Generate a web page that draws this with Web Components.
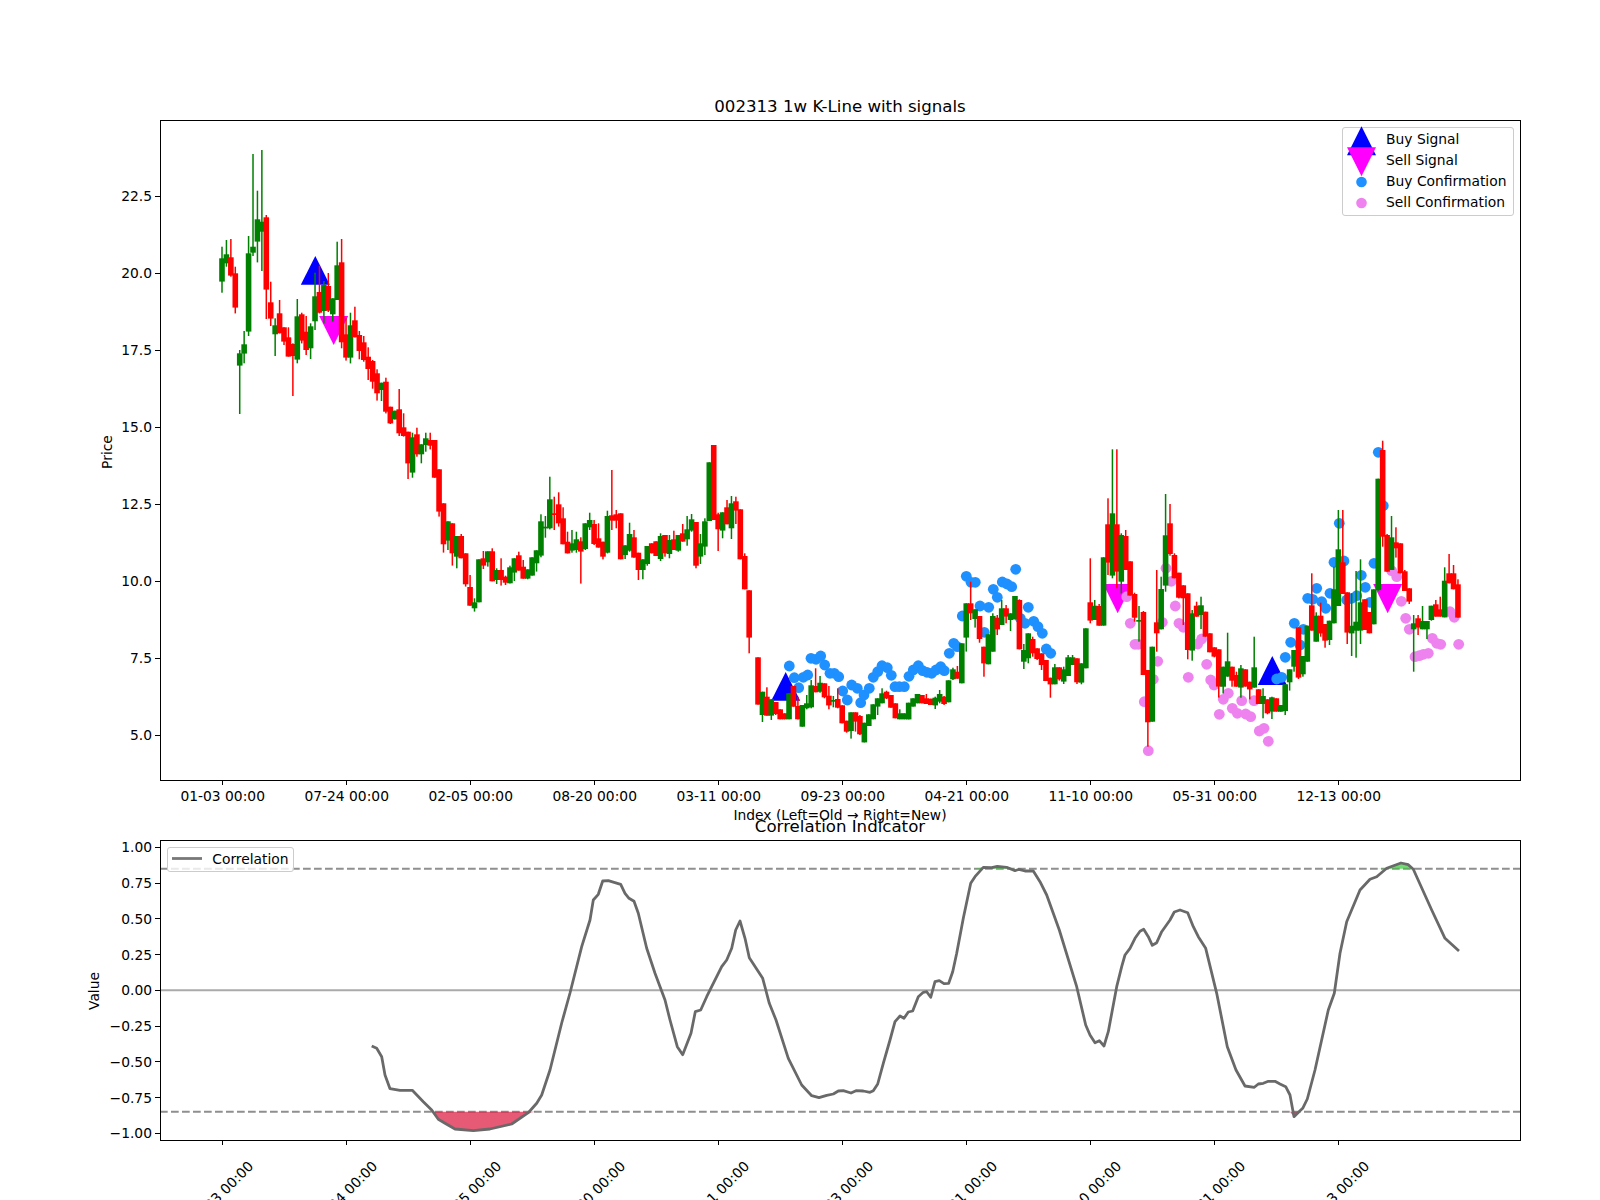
<!DOCTYPE html>
<html lang="en">
<head>
<meta charset="utf-8">
<title>002313 1w K-Line with signals</title>
<style>
html,body{margin:0;padding:0;background:#fff;font-family:"DejaVu Sans",sans-serif;}
</style>
</head>
<body>
<chart-figure>
  <price-panel>
    <chart-legend>
      <legend-item marker="up">Buy Signal</legend-item>
      <legend-item marker="down">Sell Signal</legend-item>
      <legend-item marker="blue">Buy Confirmation</legend-item>
      <legend-item marker="violet">Sell Confirmation</legend-item>
    </chart-legend>
  </price-panel>
  <corr-panel>
    <chart-legend>
      <legend-item marker="line">Correlation</legend-item>
    </chart-legend>
  </corr-panel>
</chart-figure>
<script>
const LABELS=["01-03 00:00","07-24 00:00","02-05 00:00","08-20 00:00","03-11 00:00","09-23 00:00","04-21 00:00","11-10 00:00","05-31 00:00","12-13 00:00"];
const tickX=k=>222.7+124*k;
const crispX=x=>Math.floor(x)+.5;
const TEXT_CSS=`text{font-family:"DejaVu Sans",sans-serif;font-size:13.85px;fill:#000}
.t{font-size:16.62px}.m{text-anchor:middle}.e{text-anchor:end}.k{shape-rendering:crispEdges}`;
const yTicks=(list)=>list.map(([y,s])=>`<path class="k" d="M155 ${crispX(y)}H160" stroke="#000" stroke-width="1"/><text class="e" x="152" y="${y+5}">${s}</text>`).join('');
const frame=(x,y,w,h)=>`<rect class="k" x="${x+.5}" y="${y+.5}" width="${w}" height="${h}" fill="none" stroke="#000" stroke-width="1"/>`;

/* candle rows: colour, body top, body bottom, wick top, wick bottom, read in crop coordinates y = oy + v/3 */
const SEGS=[
{s:0,oy:100,r:`g 475 545 440 578;g 463 490 420 500;r 472 527 417 530;r 520 623 500 640;g 760 797 750 942;g 733 761 693 790;g 460 695 408 708;g 440 458 162 468;g 358 425 272 487;g 365 395 150 513;r 352 569 345 657;r 607 656 545 678;g 676 703 655 768;r 640 700 600 700;r 682 725 682 735;r 712 770 682 770;r 732 768 730 888;g 649 779 597 790;r 643 722 638 730;r 695 750 648 765;g 679 745 670 777;g 589 664 518 690;r 576 638 497 640;g 555 633 543 670;r 558 632 519 636;g 595 643 595 665;g 496 600 425 600;r 487 727 417 745;r 703 773 655 782;g 676 773 638 790;r 661 712 620 712;r 705 753 693 778;r 727 780 708 785;r 770 807 742 840;r 783 845 780 866;r 820 880 808 902;g 848 870 848 903;r 845 935 833 940`},
{s:38,oy:320,r:`r 260 310 260 312;g 272 298;r 268 340 207 348;r 322 348 280 350;r 335 430 335 477;g 352 458 338 473;r 343 403 323 410;g 373 403 373 430`},
{s:46,oy:400,r:`g 115 135 98 155;r 120 137 98 148;r 120 233;r 208 335 208 350;r 310 433 310 458;g 364 422 364 450;r 370 460 370 497;g 408 470 408 505;r 408 475 402 475;r 460 553 460 560;r 561 617 525 617;g 607 625 595 635;g 478 607;r 475 497 453 507;g 454 487 454 500;r 454 544 445 544;g 510 540 505 552;r 510 540 475 557;r 530 548 527 555;g 502 550 497 550;g 475 518 475 543;r 466 512 455 512;r 500 536 480 536;g 508 536 508 538;g 472 527;g 451 490 451 515;g 364 467 343 472;g 380 385 348 413;g 298 385 230 388;r 340 345 290 390;r 313 370 277 380;r 355 433 322 433;r 425 460 395 460;g 430 452 390 458;g 418 450 395 458;r 424 455 412 551;g 370 447 370 450;g 360 382 338 390;r 372 432 360 435;r 415 443 370 443;r 425 470 425 478;g 348 458 332 460;r 346 362 210 390;r 343 362 330 385;r 340 478;g 436 465 436 477;g 402 452 368 455;r 412 473 390 473;r 458 510 458 540;g 478 510 478 538;g 438 492 438 497;r 430 460;r 424 468;g 408 477 400 483;r 405 460 405 470;g 420 462 405 475;r 418 450 392 450;g 405 452 405 455;r 400 425 372 425;g 388 418 348 437;g 358 392 342 395;r 366 497 366 505;g 430 470 402 492;g 364 440 355 465;g 187 363;r 135 360;r 343 388 338 453;g 337 392 337 415;r 322 373 300 373;g 310 385 288 417;r 304 332 290 372;r 328 478;r 468 568 460 568;r 571 713 571 760`},
{s:121,oy:600,r:`r 172 314;g 275 345 275 366;r 290 347 262 347;g 298 347 298 360;r 306 342 306 345;r 328 358;r 340 358;g 280 358;r 258 320;r 318 358 290 358;g 315 380;g 310 325 285 328;g 256 322 240 325;r 258 277 205 277;g 248 275 228 278;r 250 292 250 295;r 287 316 258 328;g 300 305 288 322;r 297 323 265 325;r 316 370;r 362 395 362 398;g 337 393 337 416;r 337 365 337 395;r 348 403 345 405;g 368 427;g 343 378;g 313 358;g 295 320 295 345;g 280 310 265 310;r 275 295 272 297;r 285 323;r 310 355;g 340 358 328 358;g 340 358;g 308 358;g 295 320;g 282 310;r 285 310;r 295 312 282 312;r 296 315;g 293 316 290 327;g 282 305 270 310;r 290 312 288 315;g 241 307;g 208 238 203 240;r 215 236 198 236;g 130 250`},
{s:168,oy:550,r:`g 160 263 160 305;r 160 190 95 210;g 178 207 178 233;r 198 267 198 278;r 290 340 290 380;g 253 343;g 198 305 190 305;r 203 238 195 255;g 175 225 150 225;r 175 200 165 220;g 190 210 190 243;g 138 208;r 150 298 148 298;g 300 335 282 357;g 250 325 250 340;r 267 310 260 320;r 295 327 295 330;r 310 345 310 360;r 330 393;r 383 403 383 443;g 352 403 342 403;r 352 388 352 392;g 358 395 350 402;g 322 378 315 378;g 322 345 315 345;r 325 397 325 402;g 340 398 340 403;g 235 355`},
{s:196,oy:420,r:`r 547 602 415 610;g 557 600 540 600;r 558 617 552 617;g 412 617;r 313 428 235 465;g 280 467 88 475;r 313 455 88 505;g 345 485 340 520;r 348 450 330 450;r 424 527;r 522 593 518 605;g 600 605 558 665;r 576 765 573 765;r 750 907 750 980;g 680 905;r 607 640 450 695;g 507 628 470 628;g 346 497 222 515;r 310 402 252 407;r 405 475 400 475;r 458 533 458 535;r 496 535 496 615;r 520 690 520 718;g 580 692 570 722;r 557 590 545 590;g 556 585 530 627;r 575 650;r 640 697;r 682 710 682 712;r 688 800 688 833;g 740 800 740 820;g 724 770 638 770;r 740 782 740 800;r 765 800 755 800;g 745 803 735 833;r 748 800;r 785 808 785 838;g 742 803 650 803;r 808 852;g 828 852 805 895;r 838 880 838 883;g 832 875 830 897;r 835 875;g 855 875;g 793 873 793 885;g 748 787 748 812;g 690 740 690 755;r 622 773 622 777;g 708 763 708 770;g 617 725;r 556 632 460 632;g 587 665 577 665;r 587 640 548 650;r 612 662 612 683;g 602 660 602 675;g 508 610 440 610;g 388 558 270 558;r 427 522 270 522;r 517 638 517 672;g 617 640 520 708;g 605 632 453 713;g 547 632 418 672;r 538 630;r 576 640;g 508 613;g 176 510 176 512;r 90 350 62 380;r 345 455 342 455;g 352 450 288 450;r 367 385 322 413;r 370 460;r 454 513 450 513;r 505 545 505 552;g 610 628 585 755;r 595 623 585 645;g 603 628 558 628;g 603 628 603 657;g 557 600 557 602;r 553 590 540 590;r 568 590 530 590;g 482 592 442 592;r 460 490 402 490;r 460 508 435 508;r 493 593 478 593`}
];
function candles(){
  let out='';
  for(const seg of SEGS){
    seg.r.split(';').forEach((row,n)=>{
      const p=row.trim().split(' ');
      const col=p[0]==='r'?'#f00':'#008000';
      const v=p.slice(1).map(a=>seg.oy+(+a)/3);
      const x=222+4.43*(seg.s+n);
      const wt=v.length>2?v[2]:v[0], wb=v.length>2?v[3]:v[1];
      out+=`<rect x="${(x-.75).toFixed(2)}" y="${wt.toFixed(1)}" width="1.5" height="${(wb-wt).toFixed(1)}" fill="${col}"/>`+
           `<rect x="${(x-2.8).toFixed(2)}" y="${v[0].toFixed(1)}" width="5.6" height="${Math.max(v[1]-v[0],1).toFixed(1)}" fill="${col}"/>`;
    });
  }
  return out;
}
const crop=(ox,oy,s)=>s.trim().split(/\s+/).map(t=>{const[a,b]=t.split(',');return[ox+a/3,oy+b/3]});
const BLUE=[...crop(700,600,`268,198 283,233 296,263 310,232 323,225 333,175 348,178 362,168 374,195 390,220 403,220 416,230 428,273 442,300 455,255 472,265 482,308 492,285 508,265 520,232 533,215 546,197 562,203 574,226 585,260 598,260 613,260 627,229 640,210 655,197 668,212 681,217 695,220 708,210 722,200 733,212 748,160 761,130 772,140`),
 ...crop(930,550,`109,79 123,97 136,97 97,198 150,168 176,172 190,118 202,142 217,96 231,102 245,110 257,58 163,247 295,172 271,205 285,220 311,214 324,230 337,250 349,297 362,310`),
 ...crop(1050,420,`985,97 1000,257 868,310 852,427 882,423 972,430 934,466 946,502 800,505 773,535 788,538 815,545 840,520 827,565 890,540 905,535 920,527 960,547 733,610 722,667 750,675 760,628 706,712 680,777 695,772`)];
const VIOLET=crop(1050,420,`295,992 283,845 310,778 323,724 255,673 265,673 241,610 337,607 230,530 348,445 364,484 376,558 387,610 400,622 415,772 443,672 455,657 470,733 482,780 492,795 508,883 520,838 535,820 547,865 562,880 587,882 602,890 575,842 612,842 628,933 642,925 655,964 1040,470 1025,452 1054,544 1067,595 1078,628 1095,710 1108,707 1120,703 1135,700 1147,655 1160,670 1172,673 1200,575 1213,592 1226,673`);
const dots=(l,c)=>l.map(([x,y])=>`<circle cx="${x.toFixed(1)}" cy="${y.toFixed(1)}" r="5.4" fill="${c}"/>`).join('');
const up=(x,a,b)=>`<path d="M${x} ${a}L${x+14.5} ${b}H${x-14.5}Z" fill="#00f"/>`;
const down=(x,b,a)=>`<path d="M${x} ${a}L${x+14.5} ${b}H${x-14.5}Z" fill="#f0f"/>`;

class ChartFigure extends HTMLElement{
  constructor(){super();this.attachShadow({mode:'open'}).innerHTML=`<style>
  :host{display:flex;flex-direction:column;gap:60px;box-sizing:border-box;width:1600px;height:1200px;padding:120px 80px 0 160px;overflow:hidden;background:#fff}
  </style><slot></slot>`;}
}
class PricePanel extends HTMLElement{
  constructor(){super();
    const yt=[[735.3,'5.0'],[658.3,'7.5'],[581.3,'10.0'],[504.3,'12.5'],[427.3,'15.0'],[350.3,'17.5'],[273.3,'20.0'],[196.3,'22.5']];
    this.attachShadow({mode:'open'}).innerHTML=`<style>
    :host{display:block;position:relative;flex:none;width:1360px;height:660px}
    svg{display:block;overflow:visible}
    ${TEXT_CSS}
    ::slotted(chart-legend){position:absolute;top:7.3px;right:6.2px;width:171.6px;height:89px;--row-pad:0px;--marker-w:38px;--marker-gap:4.8px}
    </style>
    <svg width="1360" height="660" viewBox="160 120 1360 660">
      <text class="t m" x="840" y="112">002313 1w K-Line with signals</text>
      ${up(315.3,256,284.7)}${down(333.7,316,345)}${up(785.7,672,700.7)}${down(1117.7,584,613.3)}${up(1272.3,656,685)}${down(1387.7,584,613.3)}
      ${dots(VIOLET,'#ee82ee')}${dots(BLUE,'#1e90ff')}
      ${candles()}
      ${frame(160,120,1360,660)}
      ${yTicks(yt)}
      ${LABELS.map((s,k)=>`<path class="k" d="M${crispX(tickX(k))} 780V785" stroke="#000" stroke-width="1"/><text class="m" x="${tickX(k)}" y="801">${s}</text>`).join('')}
      <text class="m" x="840" y="820">Index (Left=Old → Right=New)</text>
      <text class="m" transform="translate(111.5 452) rotate(-90)">Price</text>
    </svg><slot></slot>`;
  }
}
const CORR=[[371.7,1046],[376.7,1048.3],[381.7,1056.7],[385,1075],[390,1088.7],[400,1090.3],[412.3,1090.3],[423.3,1101.7],[431.7,1110],[438.3,1119.3],[445,1123.3],[455,1129],[473.3,1130.7],[490,1129],[511.7,1124],[528.3,1112.7],[536.7,1103.3],[541.7,1095],[550,1070],[561.7,1023],[570,993],[581.7,946.7],[590,920],[593.3,900],[598.3,894.3],[602.7,881],[608.3,880.7],[620.7,884.3],[625,893.3],[629,898.3],[634,901.3],[638.3,913.3],[646.7,948.3],[655,973.3],[665,1000],[670,1020],[677.3,1046.7],[682.7,1054.7],[691,1033.3],[695.3,1011.7],[700.7,1010],[706.7,996.7],[713.3,983.3],[721.7,966.7],[726.7,960],[731.7,948.3],[735.7,930],[740,921],[745,938.3],[749.3,957.7],[762.7,978.3],[769.3,1003.3],[776,1020],[788.3,1058.3],[801.7,1085],[811.7,1095.7],[819,1097.7],[826.7,1095.3],[833.3,1094],[838.3,1091],[843.3,1090.7],[851,1093],[856,1090.7],[863.3,1091],[870,1092.3],[873.3,1090.7],[877.7,1084],[883.3,1063.3],[890,1040],[895,1021.7],[900,1016],[904,1018.3],[908.3,1012],[912.7,1011],[918.3,996.7],[923.3,992.3],[926.7,991.7],[930.7,997.3],[935,981.7],[939.3,980.7],[944,983.7],[948.7,983.3],[952.7,971.7],[956.7,953.3],[963.3,918.3],[970.7,883.3],[975,876.7],[983.3,867.3],[991.7,867.7],[997.3,866.3],[1006.7,867.3],[1015,870.7],[1019,869.3],[1025,871],[1033.3,871],[1040,881.7],[1046.7,895],[1059.3,930],[1076.7,986.7],[1085.7,1025],[1090,1035],[1095,1042.7],[1099.3,1040.7],[1104,1046],[1108.3,1031.7],[1116.7,986.7],[1121.7,966.7],[1125,955],[1130,948.3],[1135,938.3],[1140,931.3],[1143.7,929.3],[1148.3,936.7],[1152.3,945.3],[1156.7,942.7],[1161.7,931.7],[1170,920],[1174.3,912],[1180,910],[1187.7,912.7],[1193.3,926.7],[1198.3,936.7],[1205.7,948.3],[1216.7,993.3],[1227.3,1046.7],[1236,1070],[1245,1086],[1254.3,1087.3],[1258.3,1084],[1263.3,1083.3],[1268.3,1081.3],[1275,1081.3],[1280,1084],[1285.7,1086.7],[1290,1095],[1294,1116.7],[1299,1111.7],[1302.7,1108.3],[1307.3,1099],[1315,1070],[1328.3,1010],[1334.3,993.3],[1340,953.3],[1346.7,921.7],[1360,890],[1370,879.3],[1376.7,876.7],[1386.7,868.3],[1401,863],[1408.3,864.7],[1413.3,869.3],[1431.7,910],[1445,938.3],[1459,951]];
const pts=l=>l.map(p=>p.join(',')).join(' ');
class CorrPanel extends HTMLElement{
  constructor(){super();
    const Y=v=>+(990.3-143*v).toFixed(1);
    const yt=[1,.75,.5,.25,0,-.25,-.5,-.75,-1].map(v=>[Y(v),(v<0?'−':'')+Math.abs(v).toFixed(2)]);
    const low=CORR.map(([x,y])=>[x,Math.max(y,1111.8)]), high=CORR.map(([x,y])=>[x,Math.min(y,868.8)]);
    this.attachShadow({mode:'open'}).innerHTML=`<style>
    :host{display:block;position:relative;flex:none;width:1360px;height:300px}
    svg{display:block;overflow:visible}
    ${TEXT_CSS}
    ::slotted(chart-legend){position:absolute;top:7.3px;left:6.8px;width:127.5px;height:25px;--row-pad:3.9px;--marker-w:30px;--marker-gap:10.6px}
    </style>
    <svg width="1360" height="300" viewBox="160 840 1360 300">
      <text class="t m" x="840" y="832">Correlation Indicator</text>
      <path d="M160 990.3H1520" stroke="#aaa" stroke-width="2" fill="none"/>
      <path d="M160 868.8H1520M160 1111.8H1520" stroke="#8f8f8f" stroke-width="2" stroke-dasharray="7.7 3.3" fill="none"/>
      <polygon points="${pts(low)}" fill="#dc143c" fill-opacity=".7"/>
      <polygon points="${pts(high)}" fill="#32cd32" fill-opacity=".7"/>
      <polyline points="${pts(CORR)}" fill="none" stroke="#696969" stroke-width="2.78" stroke-linejoin="round"/>
      ${frame(160,840,1360,300)}
      ${yTicks(yt)}
      ${LABELS.map((s,k)=>`<path class="k" d="M${crispX(tickX(k))} 1140V1145" stroke="#000" stroke-width="1"/><text class="e" transform="translate(${tickX(k)+31.6} 1167) rotate(-45)">${s}</text>`).join('')}
      <text class="m" transform="translate(98.5 991) rotate(-90)">Value</text>
    </svg><slot></slot>`;
  }
}
class ChartLegend extends HTMLElement{
  constructor(){super();this.attachShadow({mode:'open'}).innerHTML=`<style>
  :host{display:flex;flex-direction:column;box-sizing:border-box;background:rgba(255,255,255,.8);border:1px solid #ccc;border-radius:3px;padding:0}
  </style><slot></slot>`;}
}
class LegendItem extends HTMLElement{
  constructor(){super();
    const m=this.getAttribute('marker');
    const g={up:`<path d="M18.5 -1.8L33 27.2H4Z" fill="#00f"/>`,down:`<path d="M18.5 27.2L33 -1.8H4Z" fill="#f0f"/>`,
      blue:`<circle cx="18.5" cy="12" r="5.3" fill="#1e90ff"/>`,violet:`<circle cx="18.5" cy="12" r="5.3" fill="#ee82ee"/>`,
      line:`<path d="M0 10.5H30" stroke="#777" stroke-width="2.78"/>`}[m];
    const w=m==='line'?30:38;
    this.attachShadow({mode:'open'}).innerHTML=`<style>
    :host{display:flex;align-items:center;height:21px;flex:none;padding-left:var(--row-pad,0);font:13.85px "DejaVu Sans",sans-serif;color:#000;white-space:nowrap}
    svg{display:block;overflow:visible;flex:none;margin-right:var(--marker-gap,5px)}
    </style><svg width="${w}" height="21" viewBox="0 0 ${w} 21">${g}</svg><slot></slot>`;
  }
}
customElements.define('chart-figure',ChartFigure);
customElements.define('price-panel',PricePanel);
customElements.define('corr-panel',CorrPanel);
customElements.define('chart-legend',ChartLegend);
customElements.define('legend-item',LegendItem);
</script>
</body>
</html>
